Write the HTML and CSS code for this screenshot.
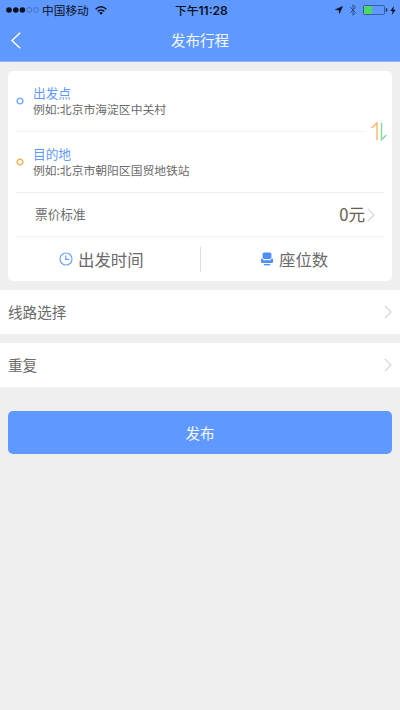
FILE: index.html
```html
<!DOCTYPE html>
<html lang="zh-CN">
<head>
<meta charset="utf-8">
<title>发布行程</title>
<link rel="stylesheet" href="styles.css">
</head>
<body>
<header class="header">
  <div class="status">
    <div class="carrier">
      <svg class="signal" width="34" height="8" viewBox="0 0 34 8"><g fill="#0b1020"><circle cx="3" cy="4" r="2.8"/><circle cx="9.8" cy="4" r="2.8"/><circle cx="16.4" cy="4" r="2.8"/></g><g fill="none" stroke="#38609f" stroke-width=".7"><circle cx="23.2" cy="4" r="2.4"/><circle cx="30" cy="4" r="2.4"/></g></svg>
      <span>中国移动</span>
      <svg class="wifi" width="12" height="9" viewBox="0 0 12 9"><g fill="none" stroke="#0b1020" stroke-width="1.5"><path d="M.6 3.2Q6-1.6 11.4 3.2"/><path d="M2.7 5.4Q6 2.5 9.3 5.4"/></g><path d="M4.1 6.7Q6 5.3 7.9 6.7L6 8.8Z" fill="#0b1020"/></svg>
    </div>
    <div class="time">下午<b>11:28</b></div>
    <div class="indicators">
      <svg width="8" height="8" viewBox="0 0 8 8"><path d="M7.6.4 4.4 7.6 4 4 .4 3.6Z" fill="#0b1020" stroke="#0b1020" stroke-width=".5"/></svg>
      <svg class="bluetooth" width="8" height="12" viewBox="0 0 8 12"><path d="M1 3 6.6 8.6 4 11.2V.8L6.6 3.4 1 9" fill="none" stroke="#2e518d" stroke-width="1"/></svg>
      <svg class="battery" width="25" height="10" viewBox="0 0 25 10"><rect x=".5" y=".5" width="21" height="9" rx="1.2" fill="none" stroke="#2d508c" stroke-width=".8"/><rect x="1" y="1" width="8" height="8" fill="#4bd864"/><path d="M22.7 3.2h.7a1 1 0 0 1 1 1v1.6a1 1 0 0 1-1 1h-.7Z" fill="#1b3565"/></svg>
      <svg width="6" height="9" viewBox="0 0 6 9"><path d="M3.8 0 .3 5H2.6L1.8 9 5.7 3.8H3.3Z" fill="#0b1020"/></svg>
    </div>
  </div>
  <div class="nav">
    <svg class="back" width="10" height="17" viewBox="0 0 10 17"><path d="M9.2.7 1 8.5 9.2 16.3" fill="none" stroke="#fff" stroke-width="1.4"/></svg>
    <h1>发布行程</h1>
  </div>
</header>
<main>
  <section class="card">
    <div class="place">
      <svg class="dot" width="8" height="8" viewBox="0 0 8 8"><circle cx="4" cy="4" r="2.9"/></svg>
      <div class="text"><div class="label">出发点</div><div class="hint">例如:北京市海淀区中关村</div></div>
    </div>
    <div class="divider">
      <svg class="swap" width="16" height="19" viewBox="0 0 16 19"><path d="M.5 6 6 .9V18.3" fill="none" stroke="#f9b869" stroke-width="1.4"/><path d="M10.5.8V17.8L15.3 13" fill="none" stroke="#82d89d" stroke-width="1.4"/></svg>
    </div>
    <div class="place second">
      <svg class="dot orange" width="8" height="8" viewBox="0 0 8 8"><circle cx="4" cy="4" r="2.9"/></svg>
      <div class="text"><div class="label">目的地</div><div class="hint">例如:北京市朝阳区国贸地铁站</div></div>
    </div>
    <div class="fare">
      <span class="fare-name">票价标准</span>
      <span class="price">0元</span>
      <svg class="chevron" width="8" height="14" viewBox="0 0 8 14"><path d="M1 .8 7 7 1 13.2"/></svg>
    </div>
    <div class="options">
      <div class="option">
        <svg width="14" height="14" viewBox="0 0 14 14"><g fill="none" stroke="#6da3fc" stroke-width="1.2"><circle cx="7" cy="7" r="6"/><path d="M6.7 3.5V7.3H10.3"/></g></svg>
        <span>出发时间</span>
      </div>
      <div class="option seats">
        <svg width="12" height="14" viewBox="0 0 12 14"><path d="M1.6 6V2.2Q1.6.5 3.3.5h5.4Q10.4.5 10.4 2.2V6L9 7.1H3Z" fill="#4f8ff8"/><path d="M0 7Q1.2 5.9 1.9 7.2L2.6 8.2H9.4L10.1 7.2Q10.8 5.9 12 7V10Q12 11.1 10.9 11.1H1.1Q0 11.1 0 10Z" fill="#4f8ff8"/><path d="M2.8 12.7H9.2" stroke="#4f8ff8" stroke-width="1.3"/></svg>
        <span>座位数</span>
      </div>
    </div>
  </section>
  <div class="row"><span>线路选择</span><svg class="chevron" width="8" height="14" viewBox="0 0 8 14"><path d="M1 .8 7 7 1 13.2"/></svg></div>
  <div class="row"><span>重复</span><svg class="chevron" width="8" height="14" viewBox="0 0 8 14"><path d="M1 .8 7 7 1 13.2"/></svg></div>
  <button class="submit">发布</button>
</main>
</body>
</html>
```
FILE: styles.css
```css
* { box-sizing: border-box; }
body {
  margin: 0;
  min-height: 710px;
  background: #efeff0;
  color: #6a6a6a;
  font-family: "Noto Sans CJK SC", sans-serif;
}
svg { display: block; flex: none; }
.header { height: 62px; background: #5f99ff; border-bottom: 1px solid #8fb5f6; }
.status {
  display: grid;
  grid-template-columns: 1fr auto 1fr;
  align-items: center;
  height: 20px;
  padding: 0 4px 0 6px;
  color: #0b1020;
  font-size: 11.7px;
  line-height: 18px;
}
.carrier { display: flex; align-items: center; }
.carrier span { margin: 0 6px 0 2px; padding-bottom: 1px; }
.time { padding-left: 1px; font-weight: 500; }
.time b { font-family: Inter, "Liberation Sans", sans-serif; font-weight: 600; font-size: 12.1px; }
.indicators { display: flex; align-items: center; justify-content: flex-end; }
.bluetooth { margin: 0 6px 0 6px; }
.battery { margin-right: 2px; }
.nav { display: grid; grid-template-columns: 1fr auto 1fr; align-items: center; height: 41px; padding: 0 11px; }
h1 { grid-column: 2; margin: 0; padding-bottom: 1px; color: #f5f9ff; font-size: 14.6px; font-weight: 400; line-height: 20px; }
.card { height: 210px; margin: 9px 8px; padding: 0 8px; background: #fff; border-radius: 5px; }
.place { display: flex; align-items: center; height: 60px; }
.text { padding-bottom: 2px; }
.dot { margin-right: 9px; fill: none; stroke: #6fa5fd; stroke-width: 1.4; }
.orange { stroke: #f4ad45; }
.label { color: #5f99ff; font-size: 12.7px; line-height: 17px; }
.hint { font-size: 11.8px; line-height: 16px; }
.divider { display: flex; align-items: center; height: 1px; }
.divider::before { content: ""; flex: none; width: 348px; height: 1px; background: #f0f0f0; }
.swap { margin-left: 7px; }
.second { border-bottom: 1px solid #f0f0f0; height: 61px; }
.fare { display: flex; align-items: center; height: 44px; padding: 0 9px 0 19px; border-bottom: 1px solid #f0f0f0; font-size: 12.7px; }
.fare-name { padding-bottom: 2px; }
.price { margin-left: auto; margin-right: 2px; padding-bottom: 2px; color: #665e50; font-size: 16.6px; line-height: 24px; }
.chevron { fill: none; stroke: #d5d5d5; stroke-width: 1.2; }
.options { display: grid; grid-template-columns: 1fr 1fr; align-items: center; height: 44px; }
.option { display: flex; align-items: center; gap: 5px; height: 25px; padding-left: 43px; font-size: 16.4px; line-height: 25px; }
.seats { gap: 6px; padding-left: 60px; border-left: 1px solid #ddd; }
.row { display: flex; align-items: center; justify-content: space-between; height: 44px; margin-bottom: 9px; padding: 0 8px; background: #fff; font-size: 14.6px; }
.row span { padding-bottom: 2px; }
.submit { display: block; width: 384px; height: 43px; margin: 24px 8px 0; padding: 0; border: 0; border-radius: 5px; background: #5f99ff; color: #f5f9ff; font: 14.6px/43px "Noto Sans CJK SC", sans-serif; }
```
